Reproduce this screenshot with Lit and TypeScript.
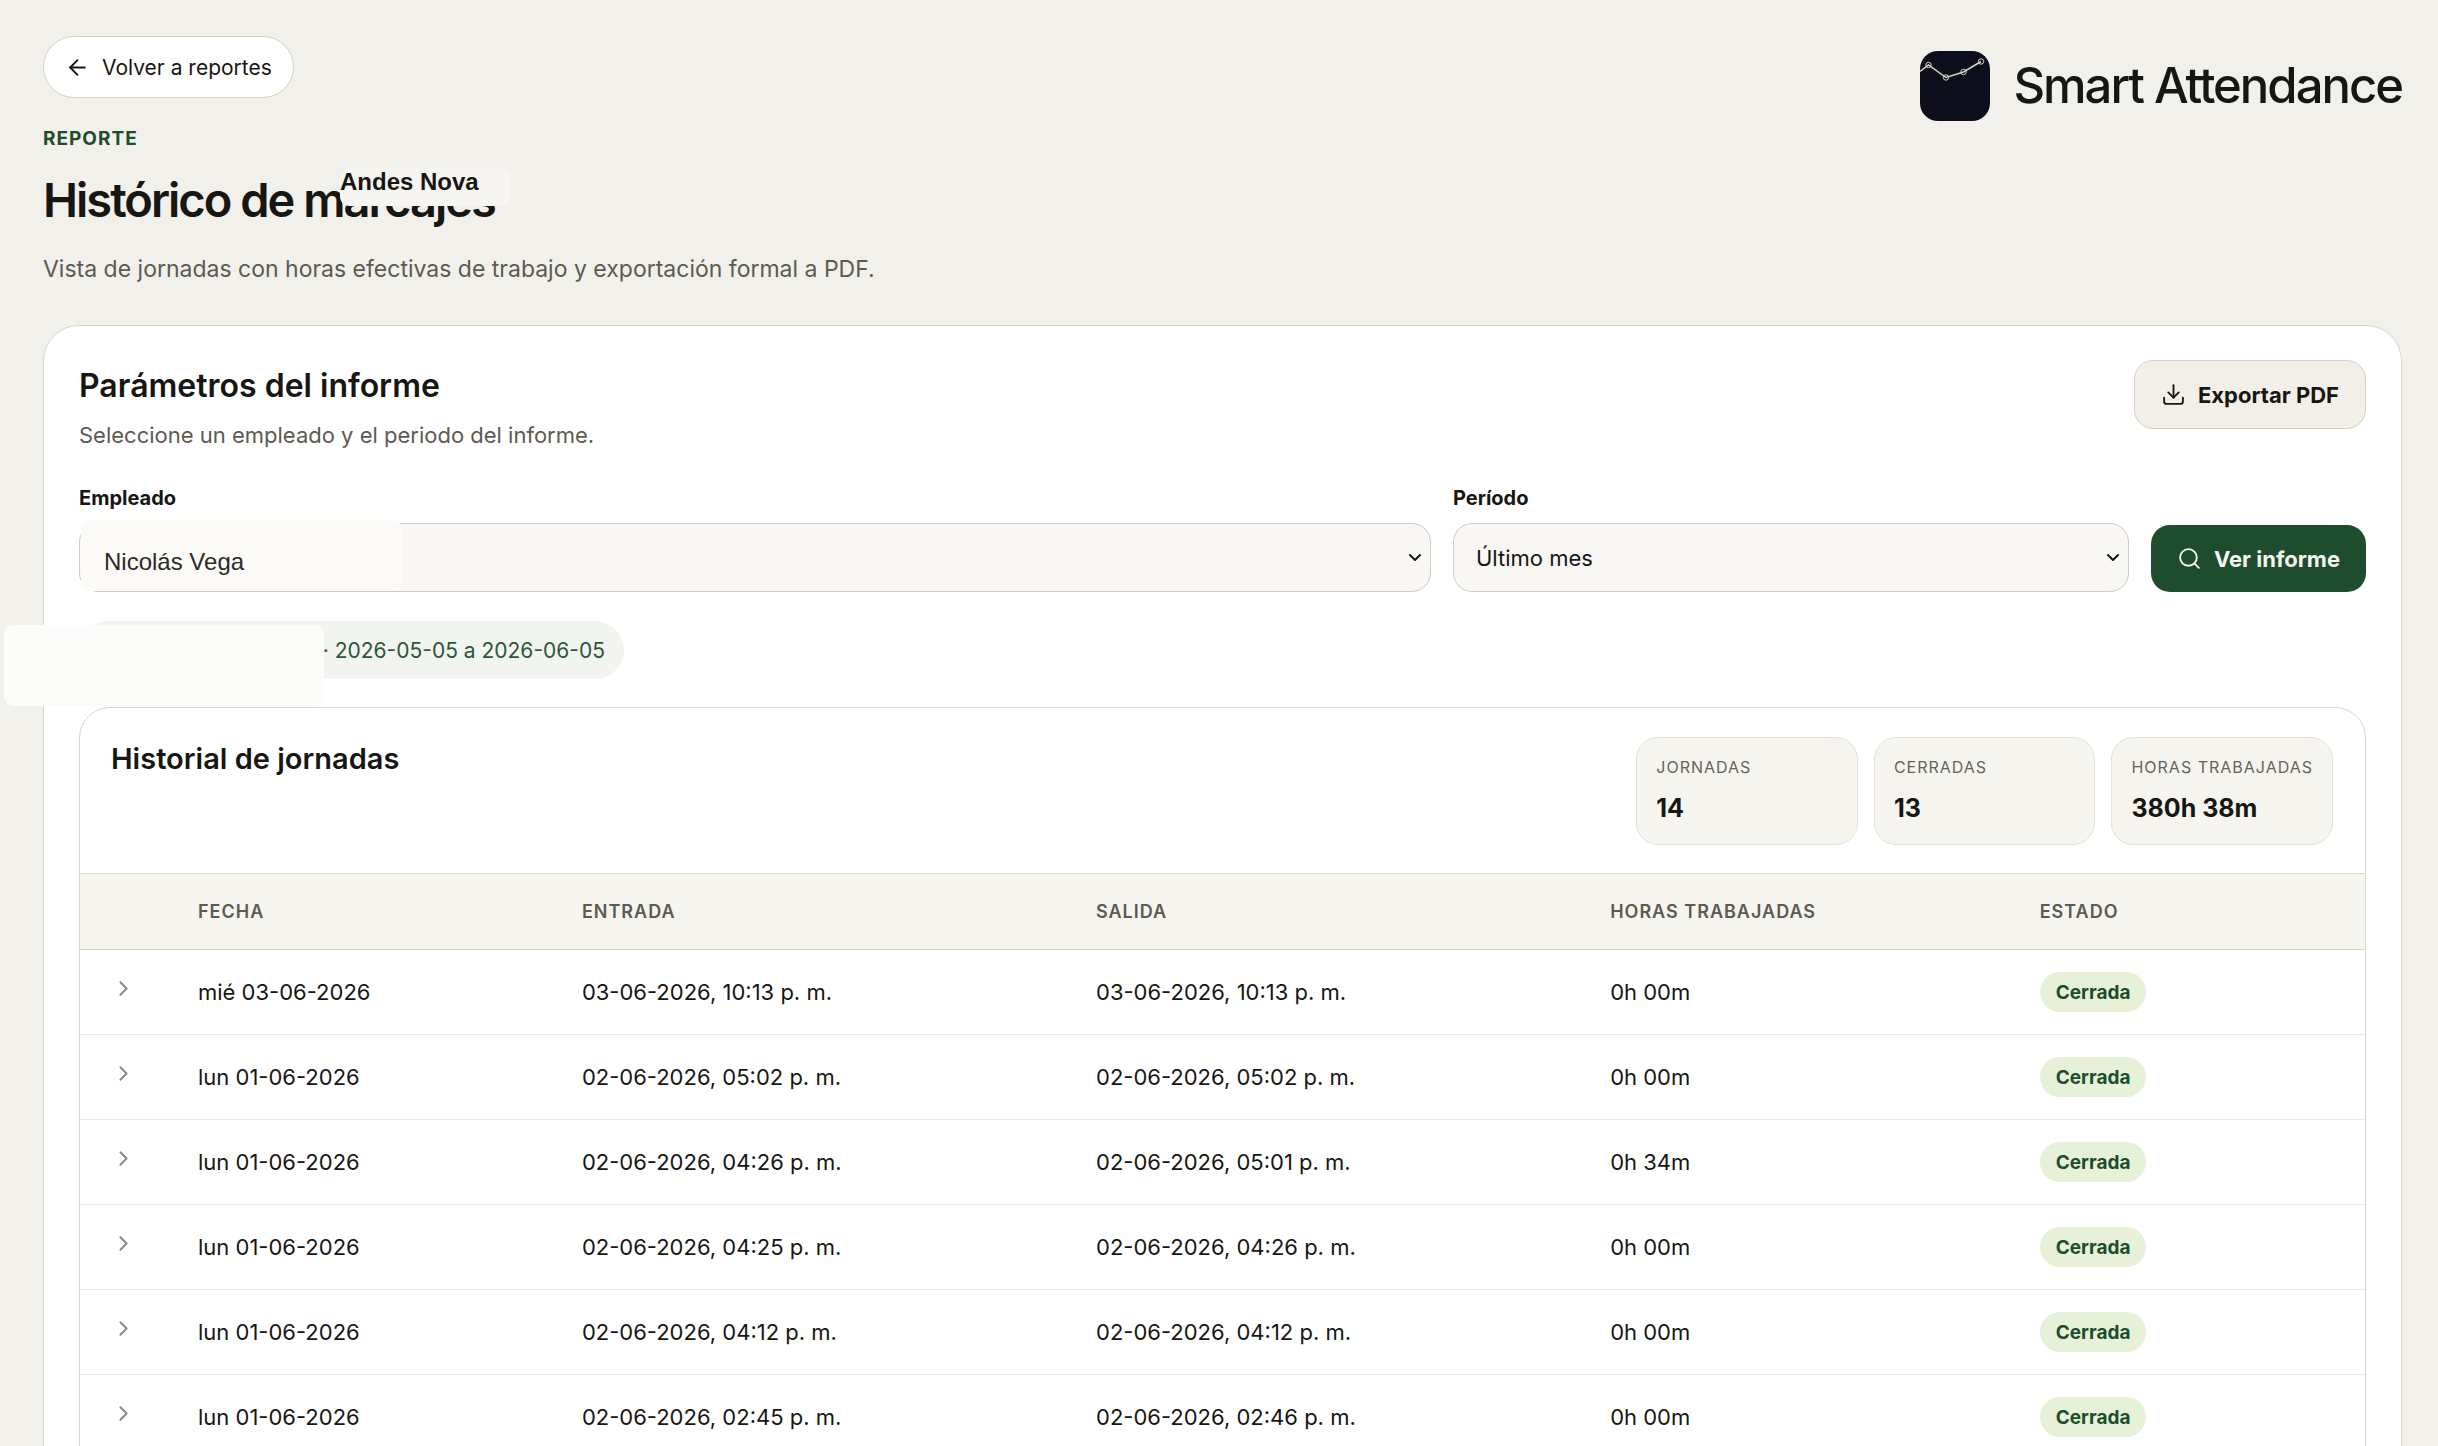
import { LitElement, html, css, svg } from "lit";
import { customElement, state } from "lit/decorators.js";

interface Shift {
  day: string;
  start: string;
  end: string;
  worked: string;
  status: string;
}

const SHIFTS: Shift[] = [
  { day: "mié 03-06-2026", start: "03-06-2026, 10:13 p. m.", end: "03-06-2026, 10:13 p. m.", worked: "0h 00m", status: "Cerrada" },
  { day: "lun 01-06-2026", start: "02-06-2026, 05:02 p. m.", end: "02-06-2026, 05:02 p. m.", worked: "0h 00m", status: "Cerrada" },
  { day: "lun 01-06-2026", start: "02-06-2026, 04:26 p. m.", end: "02-06-2026, 05:01 p. m.", worked: "0h 34m", status: "Cerrada" },
  { day: "lun 01-06-2026", start: "02-06-2026, 04:25 p. m.", end: "02-06-2026, 04:26 p. m.", worked: "0h 00m", status: "Cerrada" },
  { day: "lun 01-06-2026", start: "02-06-2026, 04:12 p. m.", end: "02-06-2026, 04:12 p. m.", worked: "0h 00m", status: "Cerrada" },
  { day: "lun 01-06-2026", start: "02-06-2026, 02:45 p. m.", end: "02-06-2026, 02:46 p. m.", worked: "0h 00m", status: "Cerrada" },
];

const STATS = [
  { label: "Jornadas", value: "14" },
  { label: "Cerradas", value: "13" },
  { label: "Horas trabajadas", value: "380h 38m" },
];

const ICONS = {
  back: svg`<path d="M19 12H5"/><path d="m12 19-7-7 7-7"/>`,
  download: svg`<path d="M21 15v4a2 2 0 0 1-2 2H5a2 2 0 0 1-2-2v-4"/><path d="m7 10 5 5 5-5"/><path d="M12 15V3"/>`,
  search: svg`<circle cx="11" cy="11" r="8"/><path d="m21 21-4.3-4.3"/>`,
  right: svg`<path d="m9 18 6-6-6-6"/>`,
};

const icon = (name: keyof typeof ICONS) =>
  html`<svg class="icon" viewBox="0 0 24 24" aria-hidden="true">${ICONS[name]}</svg>`;

const caret = html`<svg class="caret" viewBox="0 0 14 10" aria-hidden="true"><path d="M2 2l5 5 5-5" /></svg>`;

@customElement("app-root")
export class AppRoot extends LitElement {
  @state() private open = new Set<number>();

  static styles = css`
    :host {
      display: block;
      height: 100vh;
      overflow: hidden;
      background: #f2f0eb;
      color: #161613;
      font-family: Inter, "Liberation Sans", sans-serif;
      font-size: 22px;
    }
    * {
      box-sizing: border-box;
    }
    h1,
    h2,
    h3,
    p,
    dl,
    dd {
      margin: 0;
    }
    button,
    select {
      font: inherit;
      color: inherit;
    }
    .page {
      position: relative;
      padding: 36px 36px 0 43px;
    }
    .icon {
      width: 25px;
      height: 25px;
      flex: none;
      fill: none;
      stroke: currentColor;
      stroke-width: 1.8;
      stroke-linecap: round;
      stroke-linejoin: round;
    }
    .top {
      display: flex;
      justify-content: space-between;
      align-items: flex-start;
    }
    .back {
      display: inline-flex;
      align-items: center;
      gap: 12px;
      height: 62px;
      padding: 0 21px;
      border: 1px solid #d6d1c4;
      border-radius: 31px;
      background: #fff;
      color: inherit;
      font-size: 21px;
      text-decoration: none;
    }
    .eyebrow {
      margin-top: 29px;
      color: #1d4d2c;
      font-size: 19px;
      line-height: 24px;
      font-weight: 700;
      letter-spacing: 1px;
      text-transform: uppercase;
    }
    h1 {
      margin-top: 19px;
      font-size: 47px;
      line-height: 60px;
      font-weight: 600;
      letter-spacing: -2px;
    }
    .lead {
      margin-top: 24px;
      color: #5c5a51;
      font-size: 23px;
      line-height: 30px;
    }
    .brand {
      display: flex;
      align-items: center;
      gap: 23px;
      margin-top: 15px;
      font-size: 49px;
      line-height: 60px;
      font-weight: 500;
      letter-spacing: -2px;
    }
    .logo {
      width: 70px;
      height: 70px;
    }
    .tag {
      position: absolute;
      left: 340px;
      top: 168px;
      width: 171px;
      height: 38px;
      border-radius: 9px;
      background: #f6f5f2;
      font: 700 24px/28px "Liberation Sans", sans-serif;
    }
    .card {
      margin-top: 41px;
      padding: 34px 35px 60px;
      border: 1px solid #d9d7cc;
      border-radius: 36px;
      background: #fff;
    }
    .card-head {
      display: flex;
      justify-content: space-between;
      align-items: flex-start;
    }
    h2 {
      margin-top: 5px;
      font-size: 32px;
      line-height: 42px;
      font-weight: 600;
    }
    .hint {
      margin-top: 13px;
      color: #5c5a51;
      line-height: 30px;
    }
    .btn {
      display: inline-flex;
      align-items: center;
      gap: 12px;
      height: 69px;
      padding: 0 26px;
      border: 1px solid #d6d1c4;
      border-radius: 19px;
      background: #f2efe8;
      font-weight: 700;
      cursor: pointer;
    }
    .btn.primary {
      height: 67px;
      border: 0;
      background: #1d4d2c;
      color: #f7f6f0;
    }
    .form {
      display: grid;
      grid-template-columns: 2fr 1fr auto;
      gap: 22px;
      align-items: end;
      margin-top: 34px;
    }
    .field label {
      display: block;
      margin-bottom: 11px;
      font-size: 20px;
      line-height: 28px;
      font-weight: 700;
    }
    .box {
      position: relative;
      display: grid;
      align-items: center;
      height: 69px;
      border: 1px solid #d0ccc0;
      border-radius: 19px;
      background: #f9f7f3;
    }
    .box select {
      position: relative;
      grid-area: 1 / 1;
      width: 100%;
      height: 67px;
      padding: 0 22px;
      border: 0;
      border-radius: 19px;
      background: transparent;
      appearance: none;
    }
    .caret {
      grid-area: 1 / 1;
      justify-self: end;
      width: 14px;
      height: 10px;
      margin-right: 8px;
      fill: none;
      stroke: #161613;
      stroke-width: 2;
      stroke-linecap: round;
      stroke-linejoin: round;
    }
    .box.patched::before {
      content: "";
      position: absolute;
      left: 1px;
      top: -4px;
      width: 321px;
      height: 71px;
      border-radius: 9px;
      background: #fbfaf6;
    }
    .box.patched select {
      padding: 8px 24px 0;
      color: #2b2b28;
      font: 24px "Liberation Sans", sans-serif;
    }
    .range {
      position: relative;
      display: flex;
      justify-content: flex-end;
      align-items: center;
      width: fit-content;
      min-width: 545px;
      height: 58px;
      margin-top: 29px;
      padding: 0 19px;
      border-radius: 29px;
      background: #f1f4ef;
      color: #2c5639;
      font-size: 21px;
    }
    .blank {
      position: absolute;
      left: -75px;
      top: 4px;
      width: 320px;
      height: 81px;
      border-radius: 9px;
      background: #fbfbf9;
    }
    .panel {
      margin-top: 28px;
      padding-bottom: 31px;
      overflow: hidden;
      border: 1px solid #d9d7cc;
      border-radius: 31px;
      background: #fff;
    }
    .panel-head {
      display: flex;
      justify-content: space-between;
      align-items: flex-start;
      padding: 29px 32px 28px 31px;
    }
    h3 {
      margin-top: 3px;
      font-size: 29px;
      line-height: 38px;
      font-weight: 600;
    }
    .stats {
      display: grid;
      grid-template-columns: repeat(3, 1fr);
      gap: 16px;
    }
    .stat {
      height: 108px;
      padding: 16px 19px;
      border: 1px solid #e4e2d6;
      border-radius: 22px;
      background: #f6f4ef;
    }
    .stat dt {
      color: #66645b;
      font-size: 16px;
      line-height: 26px;
      letter-spacing: 1px;
      text-transform: uppercase;
    }
    .stat dd {
      margin-top: 12px;
      font-size: 25px;
      line-height: 32px;
      font-weight: 700;
    }
    table {
      width: 100%;
      table-layout: fixed;
      border-collapse: separate;
      border-spacing: 0;
    }
    .c-toggle {
      width: 87px;
    }
    .c-day {
      width: 16.8%;
    }
    .c-time {
      width: 22.5%;
    }
    .c-worked {
      width: 18.8%;
    }
    th {
      height: 77px;
      padding: 0 31px;
      border-top: 1px solid #d9d7cc;
      border-bottom: 1px solid #d9d7cc;
      background: #f6f4ef;
      color: #5c5a51;
      font-size: 18px;
      font-weight: 600;
      letter-spacing: 1px;
      text-align: left;
      text-transform: uppercase;
    }
    td {
      height: 85px;
      padding: 0 31px;
      border-bottom: 1px solid #e9e8e1;
    }
    .toggle {
      display: flex;
      margin-bottom: 8px;
      padding: 0;
      border: 0;
      background: none;
      color: #8b897e;
      cursor: pointer;
    }
    .status {
      display: inline-flex;
      align-items: center;
      height: 40px;
      padding: 0 16px;
      border-radius: 20px;
      background: #e6f1d8;
      color: #1d4d2c;
      font-size: 19px;
      font-weight: 700;
    }
  `;

  private toggle(index: number) {
    const next = new Set(this.open);
    if (!next.delete(index)) next.add(index);
    this.open = next;
  }

  render() {
    return html`
      <main class="page">
        <header class="top">
          <div>
            <a class="back" href="#reportes">${icon("back")}Volver a reportes</a>
            <p class="eyebrow">Reporte</p>
            <h1>Histórico de marcajes</h1>
            <p class="lead">Vista de jornadas con horas efectivas de trabajo y exportación formal a PDF.</p>
          </div>
          <div class="brand">
            <svg class="logo" viewBox="0 0 70 70" aria-hidden="true">
              <rect width="70" height="70" rx="18" fill="#0d0e1b" />
              <g fill="none" stroke="#d8d3c3">
                <path d="M0 20.500 8.500 14 26 26.500 43.500 21 61 10.500" stroke-width="1.500" />
                <circle cx="8.500" cy="14" r="2.700" />
                <circle cx="26" cy="26.500" r="2.700" />
                <circle cx="43.500" cy="21" r="2.700" />
                <circle cx="61" cy="10.500" r="2.700" />
              </g>
            </svg>
            <span>Smart Attendance</span>
          </div>
        </header>
        <div class="tag">Andes Nova</div>

        <section class="card">
          <div class="card-head">
            <div>
              <h2>Parámetros del informe</h2>
              <p class="hint">Seleccione un empleado y el periodo del informe.</p>
            </div>
            <button class="btn" type="button">${icon("download")}Exportar PDF</button>
          </div>

          <form class="form" @submit=${(e: Event) => e.preventDefault()}>
            <div class="field">
              <label for="employee">Empleado</label>
              <div class="box patched">
                <select id="employee"><option>Nicolás Vega</option></select>
                ${caret}
              </div>
            </div>
            <div class="field">
              <label for="period">Período</label>
              <div class="box">
                <select id="period"><option>Último mes</option></select>
                ${caret}
              </div>
            </div>
            <button class="btn primary" type="submit">${icon("search")}Ver informe</button>
          </form>

          <div class="range">· 2026-05-05 a 2026-06-05<span class="blank"></span></div>

          <section class="panel">
            <div class="panel-head">
              <h3>Historial de jornadas</h3>
              <dl class="stats">
                ${STATS.map((s) => html`<div class="stat"><dt>${s.label}</dt><dd>${s.value}</dd></div>`)}
              </dl>
            </div>
            <table>
              <colgroup>
                <col class="c-toggle" />
                <col class="c-day" />
                <col class="c-time" />
                <col class="c-time" />
                <col class="c-worked" />
                <col />
              </colgroup>
              <thead>
                <tr>
                  <th></th>
                  <th scope="col">Fecha</th>
                  <th scope="col">Entrada</th>
                  <th scope="col">Salida</th>
                  <th scope="col">Horas trabajadas</th>
                  <th scope="col">Estado</th>
                </tr>
              </thead>
              <tbody>
                ${SHIFTS.map(
                  (s, i) => html`<tr>
                    <td>
                      <button class="toggle" type="button" aria-label="Ver detalle"
                        aria-expanded=${this.open.has(i) ? "true" : "false"} @click=${() => this.toggle(i)}>
                        ${icon("right")}
                      </button>
                    </td>
                    <td>${s.day}</td>
                    <td>${s.start}</td>
                    <td>${s.end}</td>
                    <td>${s.worked}</td>
                    <td><span class="status">${s.status}</span></td>
                  </tr>`,
                )}
              </tbody>
            </table>
          </section>
        </section>
      </main>
    `;
  }
}
